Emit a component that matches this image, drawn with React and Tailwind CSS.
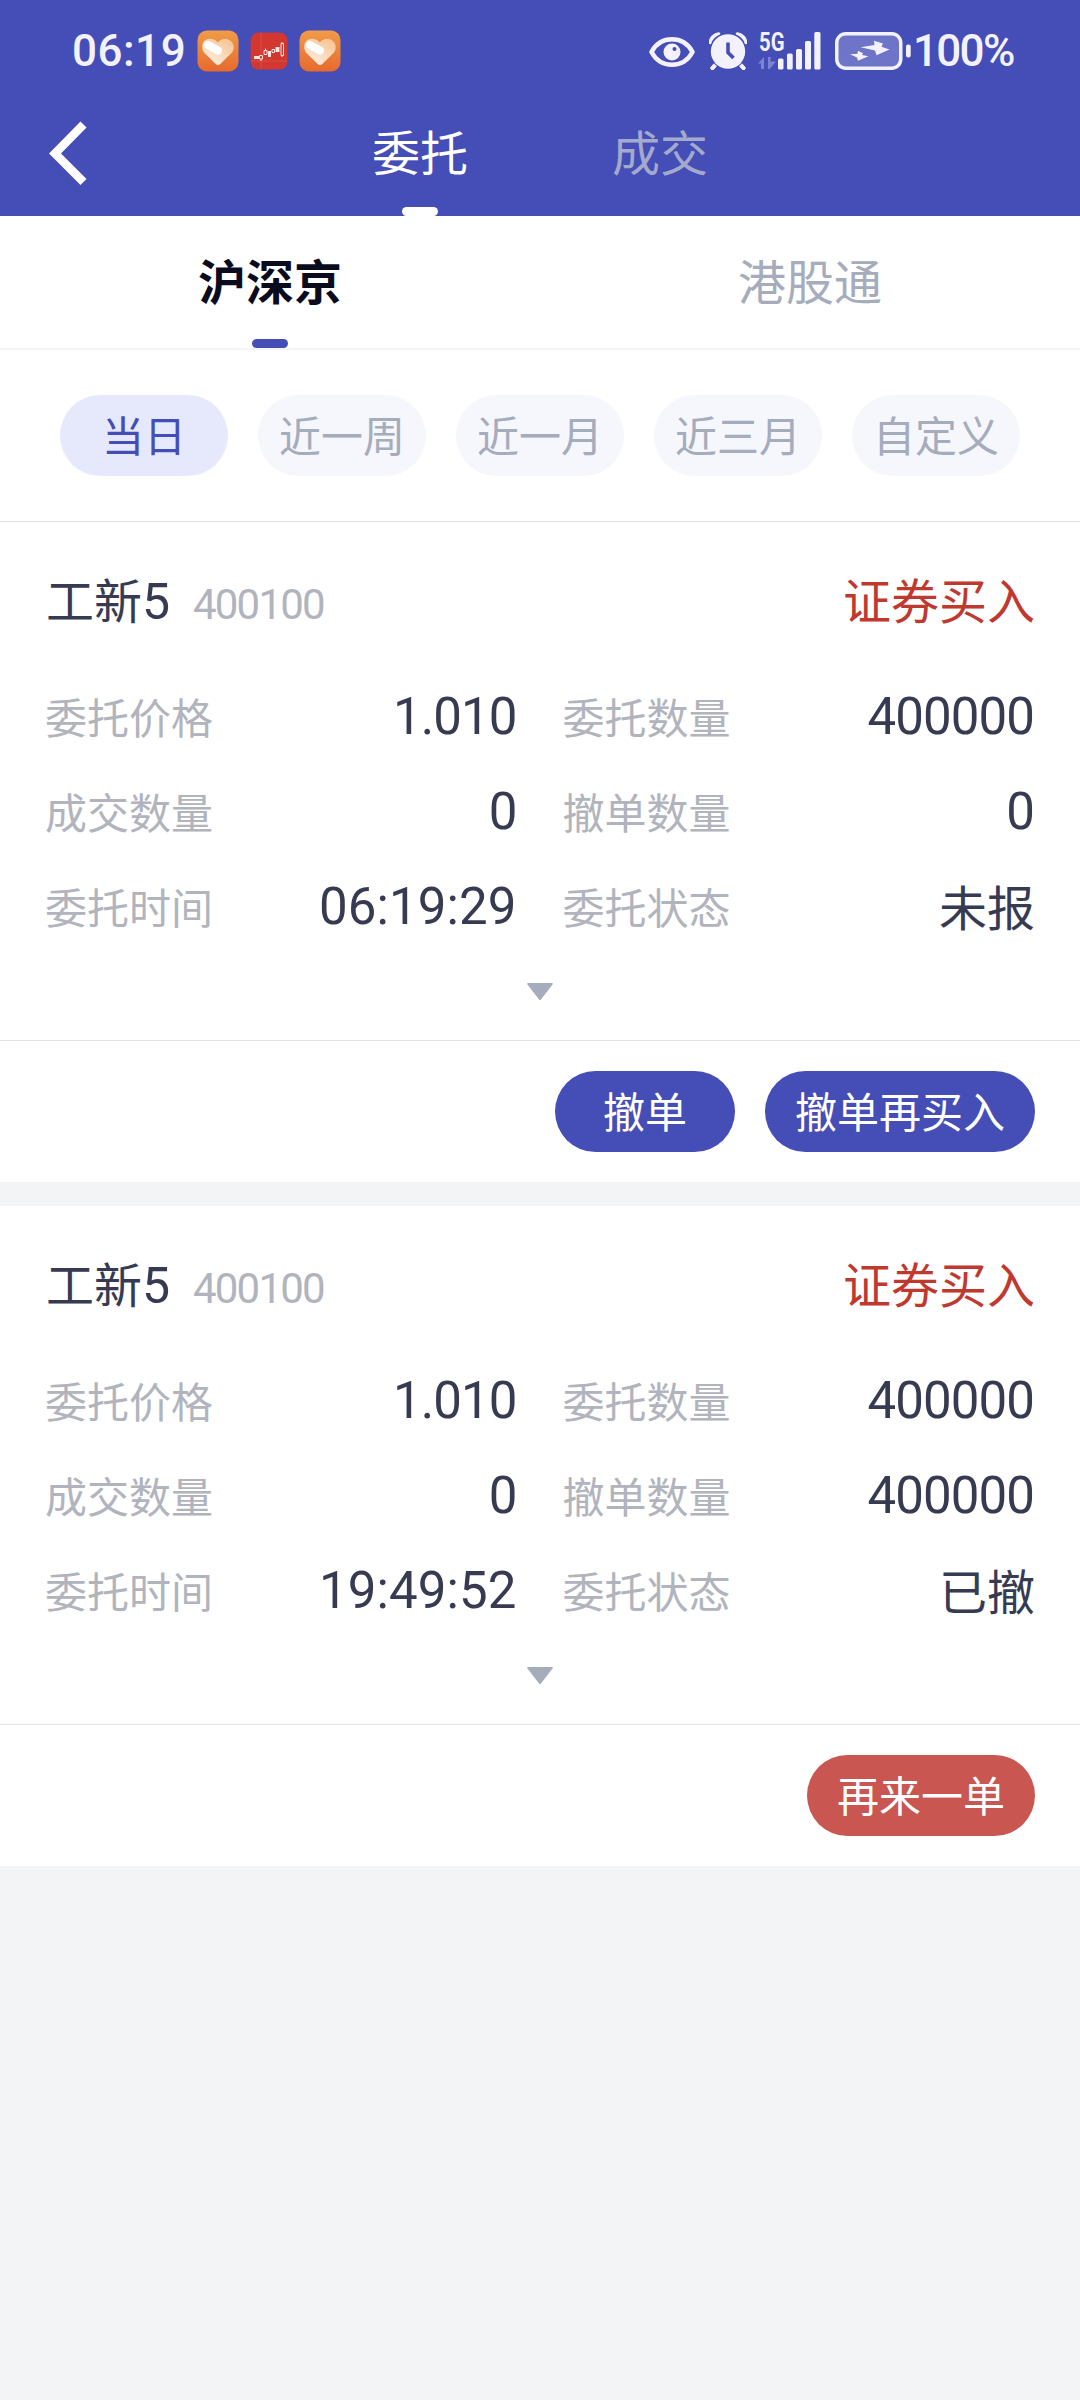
function HeartApp() {
  return (
    <svg width="42" height="42" viewBox="0 0 42 42">
      <defs>
        <linearGradient id="hg" x1="0" y1="0" x2="0" y2="1">
          <stop offset="0" stopColor="#f09c48" />
          <stop offset="1" stopColor="#e66a2e" />
        </linearGradient>
        <linearGradient id="hr" x1="1" y1="0" x2="0.3" y2="1">
          <stop offset="0" stopColor="#f5c08c" />
          <stop offset="1" stopColor="#fdeee0" />
        </linearGradient>
      </defs>
      <rect x="0.5" y="0.5" width="41" height="41" rx="9.5" fill="url(#hg)" />
      <path d="M21 12.5c3-4.300 8-4.500 11.500-2.500 5 3 5.500 9 2 13L23 34.200q-2 1.600-4 0L7.500 23C4 19 4.500 12 9 9.700c4-2 9-1 12 2.800z" fill="url(#hr)" />
      <path d="M11 15L21 20.500" stroke="#fff" strokeWidth="8" strokeLinecap="round" />
    </svg>
  );
}

function StockApp() {
  return (
    <svg width="38" height="38" viewBox="0 0 38 38">
      <rect x="0.500" y="0.500" width="37" height="37" rx="8" fill="#d2382f" />
      <path d="M11 1v36M1 29h36" stroke="#dc5a50" strokeWidth="0.600" />
      <g stroke="#fbe3e0" strokeWidth="1" fill="none">
        <path d="M4 25.500h5" strokeWidth="3" />
        <path d="M9.500 23.500h3v3.500h-3zM11 27v2" />
        <path d="M14 18.500h3v4h-3zM15.500 16.500v2" />
        <path d="M19.500 19v6" strokeWidth="3" />
        <path d="M22 17.500h2.500v3H22z" />
        <path d="M27.500 15v5" strokeWidth="4" />
        <path d="M31 11.500h2.500v12H31zM32 10v1.500M32 23.500v1.500" />
      </g>
    </svg>
  );
}

function EyeIcon() {
  return (
    <svg width="46" height="32" viewBox="0 0 46 32" fill="none">
      <path d="M2.500 16C7 7.500 14 3.300 23 3.300S39 7.500 43.500 16C39 24.500 32 28.700 23 28.700S7 24.500 2.500 16z" stroke="#f3f2fc" strokeWidth="4.500" strokeLinejoin="round" />
      <circle cx="23" cy="16" r="8.500" fill="#f3f2fc" />
      <circle cx="25.500" cy="13" r="2" fill="#454db6" />
    </svg>
  );
}

function AlarmIcon() {
  return (
    <svg width="38" height="38" viewBox="0 0 38 38" fill="none">
      <path d="M8 31L3.500 36M30 31l4.500 5" stroke="#f3f2fc" strokeWidth="4" strokeLinecap="round" />
      <path d="M.5 11C.5 5 5 1 10.500 1L12.500 2.500 1.500 13zM37.500 11C37.500 5 33 1 27.500 1L25.500 2.500 36.500 13z" fill="#f3f2fc" />
      <circle cx="19" cy="19.500" r="19" fill="#454db6" />
      <path d="M8 31L3.500 36M30 31l4.500 5" stroke="#f3f2fc" strokeWidth="4" strokeLinecap="round" />
      <path d="M1 12C1 6 5 2 10.500 1.500M37 12C37 6 33 2 27.500 1.500" stroke="#f3f2fc" strokeWidth="3" />
      <circle cx="19" cy="19.500" r="17.800" stroke="#454db6" strokeWidth="1.200" />
      <circle cx="19" cy="19.500" r="17.200" fill="#f3f2fc" />
      <path d="M19 10.500v10l5.500 5.500" stroke="#454db6" strokeWidth="3.600" />
    </svg>
  );
}

function SignalIcon() {
  return (
    <svg width="63" height="56" viewBox="0 -8 63 56" className="overflow-visible">
      <text x="0" y="19.500" fontFamily="Roboto, sans-serif" fontWeight="700" fontSize="26" textLength="25.500" lengthAdjust="spacingAndGlyphs" fill="#f3f2fc">5G</text>
      <path d="M-1 32.500l6-6.500v12H2v-5.500zM9 38V26h2.500v4.500H17L10.500 38z" fill="#7d83d0" />
      <g fill="#f3f2fc">
        <rect x="19" y="27.500" width="5.500" height="11" rx="1.500" />
        <rect x="28" y="22.500" width="5.700" height="16" rx="1.500" />
        <rect x="37" y="18" width="6" height="20.500" rx="1.500" />
        <rect x="46" y="10" width="6" height="28.500" rx="1.500" />
        <rect x="55.300" y="1" width="6.200" height="37.500" rx="1.500" />
      </g>
    </svg>
  );
}

function BatteryIcon() {
  return (
    <svg width="76" height="38" viewBox="0 0 76 38">
      <rect x="1.750" y="1.750" width="64" height="34.500" rx="9" fill="#6e74c8" stroke="#f3f2fc" strokeWidth="3.500" />
      <rect x="71" y="12.500" width="4.700" height="13" rx="2" fill="#f3f2fc" />
      <path d="M39 8.700L48 11.500 46.500 14.800 54.500 17.500 41.500 23.200 40 18.500 25.500 15.300 39.500 13zM23 18.800L28 21.300 27 23 33.500 24.200 23 28.700 22 25.500 15 22.300 22.500 21.800z" fill="#f3f2fc" />
    </svg>
  );
}

function StatusBar() {
  return (
    <div className="flex h-[102px] items-center pr-[66px] pl-[72px] font-['Roboto',sans-serif] text-[44px] font-medium text-[#f3f2fc]">
      <span className="w-[125px] tracking-[0.500px]">06:19</span>
      <div className="flex items-center gap-[11px]">
        <HeartApp />
        <StockApp />
        <HeartApp />
      </div>
      <div className="ml-auto flex items-center">
        <div className="flex pt-[1px]"><EyeIcon /></div>
        <div className="ml-[14px] flex"><AlarmIcon /></div>
        <div className="ml-[12px] flex"><SignalIcon /></div>
        <div className="ml-[13px] flex"><BatteryIcon /></div>
        <span className="ml-[2px] w-[101px] tracking-[-1.700px]">100%</span>
      </div>
    </div>
  );
}

function Header() {
  return (
    <header className="h-[216px] bg-[#454db6]">
      <StatusBar />
      <nav className="flex h-[114px]">
        <button className="flex w-[300px] items-center pb-[12px] pl-[49px]">
          <svg width="38" height="64" viewBox="0 0 38 64" fill="none">
            <path d="M34.500 3.500L6 32.500 34.500 61" stroke="#fff" strokeWidth="8.500" />
          </svg>
        </button>
        <button className="flex w-[240px] flex-col items-center justify-between text-[48px] leading-[96px] text-white">
          委托
          <span className="h-[9px] w-[36px] rounded-full bg-white" />
        </button>
        <button className="flex w-[240px] flex-col items-center text-[48px] leading-[96px] text-[#a4aacb]">成交</button>
      </nav>
    </header>
  );
}

function MarketTabs() {
  return (
    <div className="grid h-[134px] grid-cols-2 border-b-2 border-[#f3f4f6] bg-white text-[48px] leading-[126px]">
      <button className="flex h-[132px] flex-col items-center font-bold text-[#0a0c1e]">
        <span className="h-[123px]">沪深京</span>
        <span className="h-[9px] w-[36px] rounded-full bg-[#454db6]" />
      </button>
      <button className="flex h-[132px] justify-center text-[#a5acbc]">港股通</button>
    </div>
  );
}

const ranges = ["当日", "近一周", "近一月", "近三月", "自定义"];

function RangeChips() {
  return (
    <div className="flex h-[172px] gap-[30px] border-b border-[#e2e3e6] bg-white px-[60px] pt-[45px]">
      {ranges.map((r, i) => (
        <button
          key={r}
          className={
            "flex h-[81px] w-[168px] justify-center rounded-full text-[42px] leading-[78px] " +
            (i === 0 ? "bg-[#e6e9fc] text-[#454db6]" : "bg-[#f6f7fc] text-[#a5acbc]")
          }
        >
          {r}
        </button>
      ))}
    </div>
  );
}

function Field({ label, value }) {
  const isText = /[^\d.:]/.test(value);
  return (
    <div className="flex h-[95px] items-start justify-between">
      <span className="text-[42px] leading-[90px] text-[#b1b4bd]">{label}</span>
      {isText ? (
        <span className="text-[48px] leading-[89px] text-[#373b52]">{value}</span>
      ) : (
        <span
          className={
            "pr-[1px] font-['Roboto',sans-serif] text-[51px] leading-[92px] text-[#373b52] " +
            (value.includes(":") ? "tracking-[0.100px]" : "tracking-[-0.900px]")
          }
        >
          {value}
        </span>
      )}
    </div>
  );
}

function OrderCard({ fields, actions }) {
  return (
    <section className="h-[660px] bg-white">
      <div className="h-[519px] border-b border-[#e2e3e6]">
        <div className="flex h-[149px] items-start justify-between px-[45px] text-[48px] leading-[152px]">
          <div className="flex items-baseline pl-[1px] text-[#373b52]">
            <span>工新</span>
            <span className="w-[51px] font-['Roboto',sans-serif] text-[50px]">5</span>
            <span className="font-['Roboto',sans-serif] text-[42px] tracking-[-1.800px] text-[#b1b4bd]">400100</span>
          </div>
          <span className="text-[#c0392f]">证券买入</span>
        </div>
        <div className="grid grid-cols-2 gap-x-[45px] px-[45px]">
          {fields.map(([label, value]) => (
            <Field key={label} label={label} value={value} />
          ))}
        </div>
        <svg className="mx-auto mt-[26px]" width="28" height="20" viewBox="0 0 28 20">
          <path d="M2 1h24q1.500 0 .5 1.500L15 17.500q-1 1.200-2 0L1.500 2.500Q.5 1 2 1z" fill="#a5acbc" />
        </svg>
      </div>
      <div className="flex h-[141px] items-center justify-end gap-[30px] px-[45px]">
        {actions.map((a) => (
          <button
            key={a.text}
            className={
              "flex h-[81px] min-w-[180px] justify-center rounded-full px-[30px] text-[42px] leading-[78px] text-white " +
              (a.red ? "bg-[#c95651]" : "bg-[#454db6]")
            }
          >
            {a.text}
          </button>
        ))}
      </div>
    </section>
  );
}

export default function App() {
  return (
    <div className="h-[2400px] w-[1080px] overflow-hidden bg-[#f3f4f6] font-['Noto_Sans_CJK_SC',sans-serif]">
      <Header />
      <MarketTabs />
      <RangeChips />
      <div className="flex flex-col gap-[24px]">
        <OrderCard
          fields={[
            ["委托价格", "1.010"],
            ["委托数量", "400000"],
            ["成交数量", "0"],
            ["撤单数量", "0"],
            ["委托时间", "06:19:29"],
            ["委托状态", "未报"],
          ]}
          actions={[{ text: "撤单" }, { text: "撤单再买入" }]}
        />
        <OrderCard
          fields={[
            ["委托价格", "1.010"],
            ["委托数量", "400000"],
            ["成交数量", "0"],
            ["撤单数量", "400000"],
            ["委托时间", "19:49:52"],
            ["委托状态", "已撤"],
          ]}
          actions={[{ text: "再来一单", red: true }]}
        />
      </div>
    </div>
  );
}
